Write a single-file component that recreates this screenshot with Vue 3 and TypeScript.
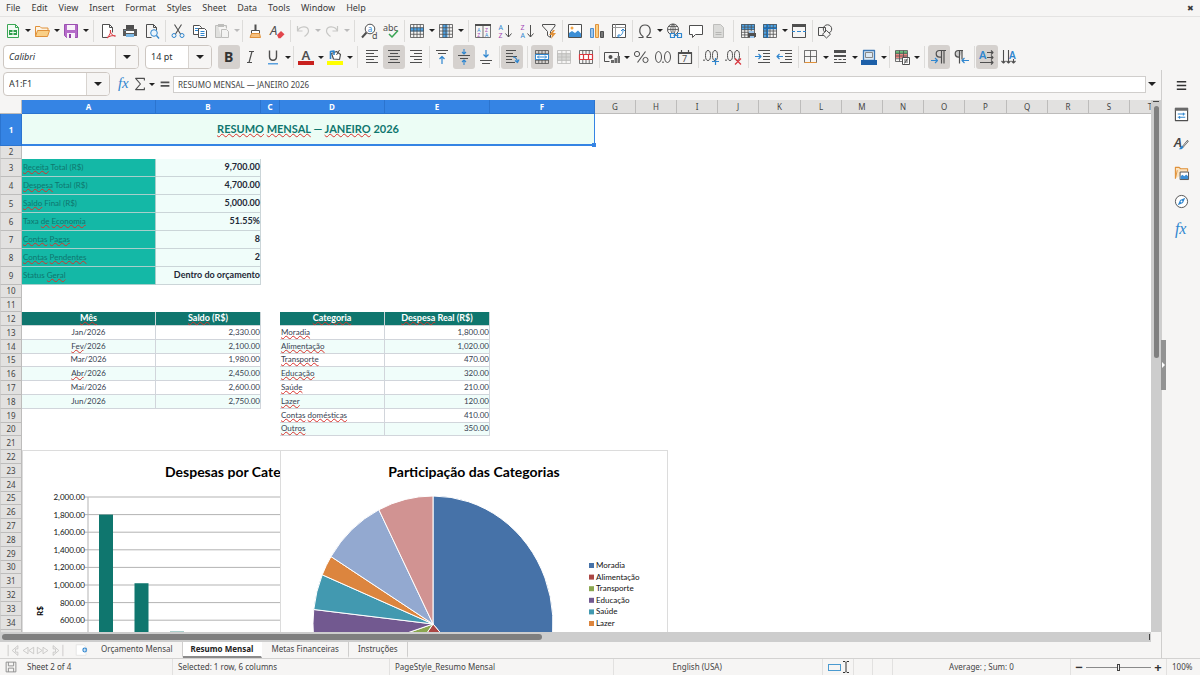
<script setup lang="ts">
import { computed, onMounted, onUnmounted, ref } from 'vue'

type Tool = { i: string; label: string; drop?: boolean; on?: boolean; off?: boolean } | { sep: 'narrow' | 'wide' }

const K = '#4f4f4f'
const B = '#2f86cf'
const grid = (x: number, y: number, w: number, h: number, c: number, r: number, s = K) => {
  let d = `M${x} ${y}h${w}v${h}h${-w}z`
  for (let n = 1; n < c; n++) d += `M${x + (w * n) / c} ${y}v${h}`
  for (let n = 1; n < r; n++) d += `M${x} ${y + (h * n) / r}h${w}`
  return `<path d="${d}" fill="none" stroke="${s}" stroke-width="0.800"/>`
}
const line = (d: string, s = K, w = 1, f = 'none') =>
  `<path d="${d}" fill="${f}" stroke="${s}" stroke-width="${w}" stroke-linejoin="round"/>`
const fill = (d: string, f: string) => `<path d="${d}" fill="${f}"/>`
const txt = (t: string, x: number, y: number, size: number, f = K, extra = '') =>
  `<text x="${x}" y="${y}" font-size="${size}" fill="${f}" font-family="Noto Sans, sans-serif" ${extra}>${t}</text>`

const icons: Record<string, string> = {
  new: line('M2.500 1.500h8l3 3v10h-11z', '#3aa655', 1, '#f3faf4') + line('M10.500 1.500v3h3', '#3aa655') + fill('M4 7h8v5h-8z', '#2f9e4b') + line('M5 9.500h6M8 7v5', '#e7f6ea'),
  open: line('M1.500 13.500v-10h4.500l1.500 1.500h6.500v3', '#e0913a', 1, '#fdf3e3') + line('M1.500 13.500l2-6h12l-2 6z', '#e0913a', 1, '#f9cf86'),
  save: line('M1.500 1.500h13v13h-11l-2-2z', '#9b4fb0', 1, '#b56bc9') + fill('M4 2h8v5h-8z', '#f8f1fa') + fill('M4 10h8v5h-8z', '#f8f1fa') + fill('M6 11h2v4h-2z', '#8d43a3'),
  pdf: line('M2.500 14.500v-13h7l3 3v5M2.500 14.500h5', K, 1, '#fff') + line('M9.500 1.500v3h3') + line('M7 15c3-3 4-6 3.500-8c-1 2 2 6.500 5 6c-3-1-6 0-8.500 2z', '#d9363e', 1),
  print: fill('M4 2h8v4h-8z', K) + fill('M1 6h14v7h-14z', '#5a5a5a') + fill('M4 8h8v2h-8z', '#fff') + fill('M4 11h8v3h-8z', '#7db9e6') + line('M2.500 7.500h1', '#7db9e6'),
  preview: line('M2.500 14.500v-13h7l3 3v3M2.500 14.500h5', K) + line('M9.500 1.500v3h3') + `<circle cx="10" cy="10" r="3.300" fill="#eaf4fc" stroke="${B}"/>` + line('M12.500 12.500l2.500 3', B, 1.3),
  cut: line('M4.500 1.500l6 9.500M11.500 1.500l-6 9.500', K, 1.1) + `<circle cx="4" cy="12.500" r="2" fill="none" stroke="${B}"/><circle cx="12" cy="12.500" r="2" fill="none" stroke="${B}"/>`,
  copy: line('M1.500 2.500h6l2 2v7h-8z', K, 1, '#fff') + line('M3 5.500h4M3 7.500h4', B) + line('M6.500 5.500h6l2 2v7h-8z', K, 1, '#fff') + line('M8.500 8.500h4M8.500 10.500h4M8.500 12.500h4', B),
  paste: line('M4 2.500h-2.500v12h6M10 2.500h2.500v3', '#b9b9b7', 1, '#dededc') + fill('M4 1h6v3h-6z', '#b9b9b7') + line('M7.500 6.500h5l2 2v6h-7z', '#b9b9b7', 1, '#f3f3f2'),
  clone: line('M8.500 1.500v6', K, 2) + line('M4.500 7.500h8v3h-8z', K, 1, '#fff') + line('M4.500 10.500l-1.500 4h10.500l-1-4z', '#e0913a', 1, '#f6c07e'),
  clear: txt('A', 1, 12, 13, K, 'font-style="italic"') + fill('M8 12l4-4l3.500 3.200l-4 4h-2z', '#e2464c'),
  undo: line('M2.500 3v5h5M2.500 8c2-5 11-6 11 0c0 2-2 4-4 5.500', '#c3c3c1', 1.2),
  redo: line('M13.500 3v5h-5M13.500 8c-2-5-11-6-11 0c0 2 2 4 4 5.500', '#c3c3c1', 1.2),
  find: `<circle cx="9" cy="6" r="4.800" fill="#fff" stroke="${K}"/>` + line('M5.500 9.500l-4.500 5', K, 2) + txt('a', 6.7, 8.500, 8, B) + txt('d', 11, 15.500, 9, K),
  spell: txt('abc', 0, 8, 9, K) + line('M6 11l3 3l6-6.500', '#3aa655', 1.5),
  row: fill('M1 4.500h14v4h-14z', '#4aa3e8') + grid(1.5, 1.5, 13, 13, 4, 4),
  col: fill('M5 1h4.500v14h-4.500z', '#4aa3e8') + grid(1.5, 1.5, 13, 13, 4, 4),
  sort: grid(0.5, 1.5, 15, 13, 2, 1) + fill('M0 1h16v2h-16z', K) + txt('A', 2.2, 8.6, 5, B) + txt('Z', 2.2, 14, 5, '#a348b5') + txt('Z', 10, 8.6, 5, '#a348b5') + txt('A', 10, 14, 5, B),
  asc: txt('A', 1.5, 6.500, 7, B) + txt('Z', 1.5, 15, 7, '#a348b5') + line('M11.500 2v12M8.500 10.500l3 3.500l3-3.500'),
  desc: txt('Z', 1.5, 6.500, 7, '#a348b5') + txt('A', 1.5, 15, 7, B) + line('M11.500 2v12M8.500 10.500l3 3.500l3-3.500'),
  filter: line('M1.500 1.500h12.500v1.500l-4.500 5.500v6l-3-2v-4l-5-5.500z') + fill('M12 7l-4 5h3l-1 4l5-6h-3l2-3z', '#e0913a'),
  image: line('M1.500 1.500h13v13h-13z', K, 1, '#fff') + fill('M2 14v-4l3-2l3 2l3-2.500l3 3v3.500z', '#3d8fd6') + `<circle cx="5" cy="5" r="1.500" fill="#f2a549"/>`,
  chart: line('M1.500 5.500h3v9h-3z', '#4f8fcd', 1, '#9cc6ee') + line('M6.500 1.500h3v13h-3z', '#e0913a', 1, '#f9cf86') + line('M11.500 8.500h3v6h-3z', K, 1, '#777'),
  pivot: line('M1.500 1.500h13v13h-13z', K, 1, '#fff') + line('M1.500 4.500h13M4.500 1.500v13', '#9a9a9a') + line('M7 13c3 0 5-2 5-6M10 8l2-2l2 2M8.500 11l-2 2l2 2', B),
  omega: line('M1.500 14.500h4.500v-1c-5-3.500-4-11.500 2-11.500s7 8 2 11.500v1h4.500', K, 1.2),
  link: `<circle cx="7" cy="6.500" r="5.500" fill="none" stroke="${K}"/>` + line('M1.500 6.500h11M7 1v10M2.500 3.500h9M7 1c-3 3-3 7 0 11M7 1c3 3 3 7 0 11', K, 0.8) + line('M4.500 10.500h4v4h-4zM11.500 10.500h4v4h-4zM7.500 12.500h5', B, 1.2, '#f6f5f4'),
  comment: line('M1.500 2.500h13v9h-7l-3 3v-3h-3z', K, 1, '#fff'),
  page: line('M3.500 1.500h7l3 3v10h-10z', '#b9b9b7', 1, '#d9d9d7') + line('M5.500 9.500h6M5.500 11.500h6', '#b0b0ae'),
  printarea: fill('M1 1h14v6h-14z', '#4aa3e8') + grid(1.5, 1.5, 13, 13, 4, 5) + fill('M8 10h8v4h-8z', '#4f4f4f') + fill('M9 8h5v2h-5zM10 13h4v2h-4z', '#9cc6ee'),
  freeze: fill('M1 1h4.500v14h-4.500zM1 1h14v4h-14z', '#4aa3e8') + grid(1.5, 1.5, 13, 13, 4, 4) + line('M5.500 1v14M1 5.500h14', '#1c6fb8', 1.5),
  split: fill('M1 1h14v3h-14z', K) + line('M1.500 1.500v13h13v-13') + line('M1 8.500h3M6 8.500h4M12 8.500h3', B),
  shapes: line('M1.500 4.500h7v8h-7z') + `<circle cx="10.500" cy="6" r="4.200" fill="none" stroke="${K}"/>` + line('M9.500 7.500l4 3.700l-4 3.800l-4-3.800z', K, 1, '#f6f5f4'),
  bold: txt('B', 3, 13, 14, '#333', 'font-weight="700"'),
  italic: line('M6 2.500h5M9 2.500l-3 11M4 13.500h5', K, 1.2),
  underline: line('M4.500 1.500v6c0 5 7 5 7 0v-6', K, 1.4) + fill('M3 14h10v1.500h-10z', '#5aa0de'),
  fontcolor: txt('A', 3.5, 10.5, 13, K, 'font-weight="600"') + fill('M0 12h16v4h-16z', '#c9211e'),
  highlight: line('M6.500 10l-2-5.500l5-2l4 3l-1 5z', K, 1.2, '#fff') + line('M3.500 10v-7.500l3.500-.5v4', B, 1.6) + line('M12.500 1l-3 5', K, 1) + fill('M0 12h16v4h-16z', '#ffff00'),
  left: line('M2 1.500h12M2 4.500h8M2 7.500h12M2 10.500h8M2 13.500h12', K, 1.2),
  center: line('M2 1.500h12M4 4.500h8M2 7.500h12M4 10.500h8M2 13.500h12', K, 1.2),
  right: line('M2 1.500h12M6 4.500h8M2 7.500h12M6 10.500h8M2 13.500h12', K, 1.2),
  top: line('M2 1.500h12M4 4.500h8', K, 1.2) + line('M8 15v-7M5.500 10l2.500-2.500l2.500 2.500', B, 1.2),
  middle: line('M2 6.500h12M4 9.500h8', K, 1.2) + line('M8 0v5M6 3l2 2l2-2M8 16v-5M6 13l2-2l2 2', B, 1.1),
  bottom: line('M2 11.500h12M4 14.500h8', K, 1.2) + line('M8 1v7M5.500 5.500l2.500 2.500l2.500-2.500', B, 1.2),
  wrap: line('M2 1.500h10M2 4.500h7M2 7.500h11M2 10.500h6M2 13.500h9', K, 1.2) + line('M9 8c3 0 4 2 4.500 5M11 11.500l2.500 2l1.500-3', B, 1.2),
  merge: grid(1.5, 1.5, 13, 13, 4, 4) + line('M1.500 5.500h13v5h-13z', B, 1, '#fff') + line('M3.500 8h9M5 6.500l-1.500 1.500l1.500 1.500M11 6.500l1.500 1.500l-1.500 1.500', B),
  mergecells: fill('M1 4h14v8h-14z', '#d4d4d2') + grid(1.5, 1.5, 13, 13, 3, 4, '#b5b5b3'),
  unmerge: grid(1.5, 1.5, 13, 13, 4, 3) + line('M1.500 5.500h13v5h-13zM5.500 5.500v5M10.500 5.500v5', '#d9363e', 1.2, '#fff'),
  currency: line('M14.500 8v-4.500h-14v9h5') + `<circle cx="6.500" cy="8" r="2" fill="${K}"/>` + fill('M7 11h3v3h-3zM10.500 9h2.500v5h-2.500zM13.500 7h2.500v7h-2.500z', '#6a6a6a'),
  percent: line('M12.500 2.500l-8 11', K, 1.1) + `<circle cx="4" cy="5" r="2.600" fill="none" stroke="${K}"/><circle cx="12.500" cy="11" r="2.600" fill="none" stroke="${K}"/>`,
  number: `<ellipse cx="3.500" cy="8" rx="3" ry="5.500" fill="none" stroke="${K}"/><ellipse cx="12.500" cy="8" rx="3" ry="5.500" fill="none" stroke="${K}"/>` + line('M8 12.500v1.500', K, 1.3),
  date: line('M1.500 3.500h13v11h-13zM4.500 1v3M11.500 1v3', K, 1.2) + line('M1.500 4h13', K, 2) + txt('7', 5, 13, 9, K),
  adddec: `<ellipse cx="5" cy="6.500" rx="2.500" ry="5" fill="none" stroke="${K}"/><ellipse cx="12" cy="6.500" rx="2.500" ry="5" fill="none" stroke="${K}"/>` + line('M1 10.500v1.500', K, 1.3) + line('M9 12.500h7M12.500 9v7', B, 1.2),
  deldec: `<ellipse cx="5" cy="6.500" rx="2.500" ry="5" fill="none" stroke="${K}"/><ellipse cx="12" cy="6.500" rx="2.500" ry="5" fill="none" stroke="${K}"/>` + line('M1 10.500v1.500', K, 1.3) + line('M10 9.500l6 6M16 9.500l-6 6', '#d9363e', 1.2),
  indent: line('M3 1.500h12M8 4.500h7M8 7.500h7M8 10.500h7M3 13.500h12', K, 1.1) + line('M0 7.500h6M3.500 5l2.500 2.500l-2.500 2.500', B, 1.1),
  outdent: line('M3 1.500h12M8 4.500h7M8 7.500h7M8 10.500h7M3 13.500h12', K, 1.1) + line('M0 7.500h6M2.500 5l-2.500 2.500l2.500 2.500', B, 1.1),
  borders: grid(1.5, 1.5, 12, 12, 2, 2) + line('M1.500 13.500h12', '#e0913a'),
  linestyle: fill('M2 1h12v3h-12zM2 6h12v2h-12z', K) + line('M2 10.500h3M6.500 10.500h3M11 10.500h3', K, 1) + line('M2 13.500h12', K, 1),
  bordercolor: line('M2.500 1.500h11v10h-11z', '#3d78b5', 1.3, '#dceaf6') + line('M4.500 3.500h7v5h-7z', '#888') + fill('M0 11h16v5h-16z', '#1d5fa8'),
  conditional: fill('M1 2h12v3h-12z', '#6cc07e') + fill('M1 5h12v4h-12z', '#ef8783') + grid(1.5, 1.5, 12, 11, 3, 4) + line('M8.500 8.500h7v7h-7z', K, 1, '#fff') + line('M10 11h4M10 13h4M13.500 9.500l-3 5', K, 0.9),
  ltr: line('M15 1.500h-6.500a3.300 3.300 0 0 0 0 6.600h1.500M10.500 1.500v13M13 1.500v13', K, 1.2) + line('M0 11.500h6M4 9l2.500 2.500l-2.500 2.500', B, 1.1),
  rtl: line('M10 1.500h-4.500a3.300 3.300 0 0 0 0 6.600h1M6.500 1.500v13M9 1.500v9', K, 1.2, '#ccc') + line('M9 11.500h7M11.500 9l-2.500 2.500l2.500 2.500', B, 1.1),
  horiz: txt('A', 0, 10, 11, B, 'font-weight="600"') + line('M8 3.500h6M8 8.500h6M1 13.500h13M12 1.500l2 2l-2 2M12 6.500l2 2l-2 2M12 11.500l2 2l-2 2', K, 1.1),
  vert: txt('A', 8, 10, 10, B, 'font-weight="600"') + line('M2.500 1v13M7.500 1v13M12.500 10v4M.5 12l2 2l2-2M5.500 12l2 2l2-2M10.500 12l2 2l2-2', K, 1.1),
  fx: `<text x="1" y="12" font-size="17" fill="${B}" font-style="italic" font-family="Liberation Serif, serif">fx</text>`,
  sigma: line('M13 4v-2.500h-10l5.500 6.500l-5.500 6.500h10v-2.500', K, 1.3),
  equals: line('M3 6h10M3 10h10', K, 2),
  menu: line('M3 4h10M3 8h10M3 12h10', '#333', 1.8),
  props: line('M1.500 1.500h13v13h-13z', K, 1.2, '#fff') + fill('M1 1h14v3h-14z', '#6a6a6a') + line('M4 7.500h8M10 6v3M4 11h8M6 9.500v3', B, 1.1),
  styles: txt('A', 0, 12, 14, '#444', 'font-weight="600" font-style="italic"') + line('M15 5l-6 7', K, 2) + line('M14.500 5.500l-5 6', '#fff', 0.8) + fill('M5 14c2 0 1-3 4-3.500c2 2 0 4.500-4 3.500z', B),
  gallery: line('M1.500 14.500v-12h4l1.500 1.500h7.500v3', '#e0913a', 1.2, '#fbe3c0') + line('M1.500 14.500l2-9', '#e0913a') + line('M6.500 7.500h9v8h-9z', K, 1, '#fff') + fill('M7 15v-3l2-1.500l2 1.500l2-2l2 2v3z', '#3d8fd6'),
  navigator: `<circle cx="8" cy="8" r="6.500" fill="#fff" stroke="${K}"/>` + fill('M12 4l-2.500 5.500l-5.500 2.500l2.500-5.500z', B) + `<circle cx="8" cy="8" r="1" fill="#fff"/>`,
  savesmall: line('M1.500 1.500h13v13h-13zM4.500 1.500v5h7v-5M4.500 14.500v-5h7v5', '#8a8a8a', 1.2),
  addsheet: line('M1.500 14.500v-13h9l3 3v10z', '#e3e3e1', 1, '#fff') + `<circle cx="12" cy="8" r="3" fill="${B}"/>` + line('M10 8h4M12 6v4', '#fff'),
}

const n = { sep: 'narrow' } as Tool
const w = { sep: 'wide' } as Tool
const t = (i: string, label: string, o: { drop?: boolean; on?: boolean; off?: boolean } = {}): Tool => ({ i, label, ...o })

const bar1: Tool[] = [
  t('new', 'New', { drop: true }), t('open', 'Open', { drop: true }), t('save', 'Save', { drop: true }), w,
  t('pdf', 'Export as PDF'), t('print', 'Print'), t('preview', 'Print Preview'), n,
  t('cut', 'Cut'), t('copy', 'Copy'), t('paste', 'Paste', { drop: true, off: true }), n,
  t('clone', 'Clone Formatting'), t('clear', 'Clear Formatting'), n,
  t('undo', 'Undo', { drop: true, off: true }), t('redo', 'Redo', { drop: true, off: true }), w,
  t('find', 'Find and Replace'), t('spell', 'Spelling'), n,
  t('row', 'Row', { drop: true }), t('col', 'Column', { drop: true }), w,
  t('sort', 'Sort'), t('asc', 'Sort Ascending'), t('desc', 'Sort Descending'), t('filter', 'AutoFilter'), n,
  t('image', 'Insert Image'), t('chart', 'Insert Chart'), t('pivot', 'Pivot Table'), n,
  t('omega', 'Special Character', { drop: true }), t('link', 'Hyperlink'), t('comment', 'Comment'), t('page', 'Headers and Footers', { off: true }), w,
  t('printarea', 'Print Area'), t('freeze', 'Freeze Panes', { drop: true }), t('split', 'Split Window'), n,
  t('shapes', 'Draw Functions'),
]
const bar2: Tool[] = [
  t('bold', 'Bold', { on: true }), t('italic', 'Italic'), t('underline', 'Underline', { drop: true }), n,
  t('fontcolor', 'Font Color', { drop: true }), t('highlight', 'Highlighting', { drop: true }), w,
  t('left', 'Align Left'), t('center', 'Center', { on: true }), t('right', 'Align Right'), n,
  t('top', 'Align Top'), t('middle', 'Center Vertically', { on: true }), t('bottom', 'Align Bottom'), n,
  t('wrap', 'Wrap Text', { on: true }), w,
  t('merge', 'Merge and Center', { on: true }), t('mergecells', 'Merge Cells', { off: true }), t('unmerge', 'Unmerge Cells'), n,
  t('currency', 'Currency', { drop: true }), t('percent', 'Percent'), t('number', 'Number'), t('date', 'Date'), n,
  t('adddec', 'Add Decimal Place'), t('deldec', 'Delete Decimal Place'), w,
  t('indent', 'Increase Indent'), t('outdent', 'Decrease Indent'), n,
  t('borders', 'Borders', { drop: true }), t('linestyle', 'Border Style', { drop: true }), t('bordercolor', 'Border Color', { drop: true }), n,
  t('conditional', 'Conditional', { drop: true }), w,
  t('ltr', 'Left-To-Right', { on: true }), t('rtl', 'Right-To-Left'), n,
  t('horiz', 'Text direction left to right', { on: true }), t('vert', 'Text direction top to bottom'),
]

const menus = ['File', 'Edit', 'View', 'Insert', 'Format', 'Styles', 'Sheet', 'Data', 'Tools', 'Window', 'Help']
const sideTools = [['props', 'Properties'], ['styles', 'Styles'], ['gallery', 'Gallery'], ['navigator', 'Navigator'], ['fx', 'Functions']]
const tabs = ['Orçamento Mensal', 'Resumo Mensal', 'Metas Financeiras', 'Instruções']
const activeTab = ref('Resumo Mensal')
const formula = ref('RESUMO MENSAL — JANEIRO 2026')
const zoom = ref(100)

// Only the rows and columns that fit in the window are rendered.
const win = ref({ w: window.innerWidth, h: window.innerHeight })
const measure = () => { win.value = { w: window.innerWidth, h: window.innerHeight } }
onMounted(() => window.addEventListener('resize', measure))
onUnmounted(() => window.removeEventListener('resize', measure))

const letters = [...'ABCDEFGHIJKLMNOPQRSTUVWXYZ']
const allNames = [...letters, ...letters.map((c) => 'A' + c), ...letters.map((c) => 'B' + c)]
const baseWidths = [134, 105, 19, 105, 105, 105]
const columns = computed(() => {
  const out: { name: string; width: number }[] = []
  let x = 22
  for (let i = 0; i < allNames.length && (i < 6 || x < win.value.w - 50); i++) {
    const width = baseWidths[i] ?? (i % 5 === 0 ? 42 : 41)
    out.push({ name: allNames[i], width })
    x += width
  }
  return out
})
const tableWidth = computed(() => 22 + columns.value.reduce((a, c) => a + c.width, 0))
const rowCount = computed(() => Math.max(22, 9 + Math.ceil((win.value.h - 328) / 13.8)))

// Words wrapped in underscores are flagged by the spell checker.
const cells: Record<string, { text: string; kind: string }> = {}
const put = (at: string, text: string, kind: string) => { cells[at] = { text, kind } }
const summary = [
  ['_Receita_ Total (R$)', '9,700.00'], ['_Despesa_ Total (R$)', '4,700.00'], ['_Saldo_ Final (R$)', '5,000.00'],
  ['Taxa _de_ _Economia_', '51.55%'], ['_Contas_ _Pagas_', '8'], ['_Contas_ _Pendentes_', '2'], ['Status _Geral_', 'Dentro do orçamento'],
]
summary.forEach(([a, b], i) => { put('A' + (i + 3), a, 'key'); put('B' + (i + 3), b, 'total') })
put('A12', '_Mês_', 'head'); put('B12', '_Saldo_ (R$)', 'head')
put('D12', '_Categoria_', 'head'); put('E12', '_Despesa_ Real (R$)', 'head')
const months = [['Jan/2026', '2,330.00'], ['_Fev_/2026', '2,100.00'], ['Mar/2026', '1,980.00'], ['_Abr_/2026', '2,450.00'], ['Mai/2026', '2,600.00'], ['Jun/2026', '2,750.00']]
months.forEach(([a, b], i) => {
  const z = i % 2 ? ' tint' : ''
  put('A' + (i + 13), a, 'mid' + z); put('B' + (i + 13), b, 'num' + z)
})
const categories = [
  { name: 'Moradia', spell: '_Moradia_', value: 1800, color: '#4672a8' },
  { name: 'Alimentação', spell: '_Alimentação_', value: 1020, color: '#ab4744' },
  { name: 'Transporte', spell: '_Transporte_', value: 470, color: '#8aa64f' },
  { name: 'Educação', spell: '_Educação_', value: 320, color: '#725990' },
  { name: 'Saúde', spell: '_Saúde_', value: 210, color: '#4299b0' },
  { name: 'Lazer', spell: '_Lazer_', value: 120, color: '#dc853e' },
  { name: 'Contas domésticas', spell: '_Contas_ _domésticas_', value: 410, color: '#93a9d0' },
  { name: 'Outros', spell: '_Outros_', value: 350, color: '#d19392' },
]
const money = (v: number) => v.toLocaleString('en-US', { minimumFractionDigits: 2 })
categories.forEach((c, i) => {
  const z = i % 2 ? ' tint' : ''
  put('D' + (i + 13), c.spell, 'txt' + z); put('E' + (i + 13), money(c.value), 'num' + z)
})
const parts = (s: string) => s.split('_').map((text, i) => ({ text, bad: i % 2 === 1 })).filter((p) => p.text)

const total = categories.reduce((a, c) => a + c.value, 0)
let acc = 0
const slices = categories.map((c) => {
  const pt = (v: number) => {
    const a = (v / total) * Math.PI * 2
    return `${153 + 120 * Math.sin(a)} ${174 - 128 * Math.cos(a)}`
  }
  const from = pt(acc)
  acc += c.value
  return { color: c.color, d: `M153 174L${from}A120 128 0 0 1 ${pt(acc)}Z` }
})
const yOf = (v: number) => 223 - (v * 176) / 2000
const ticks = Array.from({ length: 11 }, (_, i) => i * 200)
</script>

<template>
  <div class="app">
    <nav class="menubar" aria-label="Menu">
      <button v-for="m in menus" :key="m" type="button">{{ m }}</button>
      <button class="close" type="button" aria-label="Close document">✖</button>
    </nav>

    <div class="toolbar first" role="toolbar" aria-label="Standard">
      <template v-for="(b, i) in bar1" :key="i">
        <span v-if="'sep' in b" class="sep" :class="b.sep"></span>
        <template v-else>
          <button class="tool" :class="{ on: b.on }" type="button" :aria-label="b.label" :disabled="b.off">
            <svg viewBox="0 0 16 16" v-html="icons[b.i]"></svg>
          </button>
          <button v-if="b.drop" class="drop" type="button" :aria-label="b.label + ' options'" :disabled="b.off"><i></i></button>
        </template>
      </template>
    </div>

    <div class="toolbar second" role="toolbar" aria-label="Formatting">
      <div class="combo font"><input value="Calibri" aria-label="Font name" /><button type="button" aria-label="Choose font"><i></i></button></div>
      <div class="combo size"><input value="14 pt" aria-label="Font size" /><button type="button" aria-label="Choose size"><i></i></button></div>
      <template v-for="(b, i) in bar2" :key="i">
        <span v-if="'sep' in b" class="sep" :class="b.sep"></span>
        <template v-else>
          <button class="tool" :class="{ on: b.on }" type="button" :aria-label="b.label" :disabled="b.off">
            <svg viewBox="0 0 16 16" v-html="icons[b.i]"></svg>
          </button>
          <button v-if="b.drop" class="drop" type="button" :aria-label="b.label + ' options'"><i></i></button>
        </template>
      </template>
    </div>

    <div class="body">
      <main class="main">
        <div class="formulabar">
          <div class="combo name"><input value="A1:F1" aria-label="Name box" /><button type="button" aria-label="Choose range"><i></i></button></div>
          <button class="ftool" type="button" aria-label="Function Wizard"><svg viewBox="0 0 16 16" v-html="icons.fx"></svg></button>
          <button class="ftool" type="button" aria-label="Select Function"><svg viewBox="0 0 16 16" v-html="icons.sigma"></svg></button>
          <button class="drop" type="button" aria-label="Function options"><i></i></button>
          <button class="ftool" type="button" aria-label="Formula"><svg viewBox="0 0 16 16" v-html="icons.equals"></svg></button>
          <input v-model="formula" class="formula" aria-label="Input line" />
          <button class="expand" type="button" aria-label="Expand formula bar"><i></i></button>
        </div>

        <div class="view">
          <div class="sheet">
            <table :style="{ width: tableWidth + 'px' }">
              <colgroup>
                <col class="rowcol" />
                <col v-for="c in columns" :key="c.name" :style="{ width: c.width + 'px' }" />
              </colgroup>
              <thead>
                <tr>
                  <th class="corner"></th>
                  <th v-for="(c, i) in columns" :key="c.name" scope="col" :class="{ sel: i < 6 }">{{ c.name }}</th>
                </tr>
              </thead>
              <tbody>
                <tr v-for="r in rowCount" :key="r" :class="{ title: r === 1, thin: r === 2 || (r > 9 && r % 5 === 0), tall: r > 2 && r < 10 }">
                  <th scope="row" :class="{ sel: r === 1 }">{{ r }}</th>
                  <template v-for="(c, i) in columns" :key="c.name">
                    <td v-if="r === 1 && i === 0" colspan="6" class="banner">
                      <span class="bad">RESUMO</span> <span class="bad">MENSAL</span> — <span class="bad">JANEIRO</span> 2026
                      <b class="handle"></b>
                    </td>
                    <td v-else-if="r > 1 || i > 5" :class="cells[c.name + r]?.kind">
                      <template v-if="cells[c.name + r]"><span v-for="(p, k) in parts(cells[c.name + r].text)" :key="k" :class="{ bad: p.bad }">{{ p.text }}</span></template>
                    </td>
                  </template>
                </tr>
              </tbody>
            </table>

            <figure class="chart bars">
              <svg width="446" height="290" viewBox="0 0 446 290" role="img" aria-label="Despesas por Categoria">
                <text x="143" y="27" class="ctitle">Despesas por Categoria</text>
                <g v-for="v in ticks" :key="v">
                  <line x1="63" x2="350" :y1="yOf(v)" :y2="yOf(v)" class="gridline" />
                  <text x="63" :y="yOf(v) + 3" class="tick">{{ money(v) }}</text>
                </g>
                <line x1="66" x2="66" y1="47" y2="223" class="gridline" />
                <rect v-for="(c, i) in categories" :key="c.name" :x="77 + i * 35.5" :y="yOf(c.value)" width="14" :height="(c.value * 176) / 2000" fill="#0f766e" />
                <text transform="translate(21 166) rotate(-90)" class="axis">R$</text>
              </svg>
            </figure>
            <figure class="chart pie">
              <svg width="388" height="330" viewBox="0 0 388 330" role="img" aria-label="Participação das Categorias">
                <text x="194" y="27" class="ctitle centered">Participação das Categorias</text>
                <path v-for="s in slices" :key="s.color" :d="s.d" :fill="s.color" stroke="#fff" />
                <g v-for="(c, i) in categories" :key="c.name">
                  <rect x="309" :y="113 + i * 11.6" width="5" height="5" :fill="c.color" />
                  <text x="316" :y="118 + i * 11.6" class="legend">{{ c.name }}</text>
                </g>
              </svg>
            </figure>
          </div>
          <div class="vscroll"><i></i></div>
        </div>

        <div class="hscroll"><div class="track"><i></i></div></div>

        <div class="tabs">
          <div class="tabnav">
            <button type="button" aria-label="First sheet"><svg viewBox="0 0 16 16"><path d="M2 1v14M14 2L7 8l7 6v-4h-3V6h3z" /></svg></button>
            <button type="button" aria-label="Previous sheet"><svg viewBox="0 0 16 16"><path d="M8 4L2 8l6 4zM15 4L9 8l6 4z" /></svg></button>
            <button type="button" aria-label="Next sheet"><svg viewBox="0 0 16 16"><path d="M1 4l6 4l-6 4zM8 4l6 4l-6 4z" /></svg></button>
            <button type="button" aria-label="Last sheet"><svg viewBox="0 0 16 16"><path d="M14 1v14M2 2l7 6l-7 6v-4h3V6H2z" /></svg></button>
          </div>
          <button class="add" type="button" aria-label="Add sheet"><svg viewBox="0 0 16 16" v-html="icons.addsheet"></svg></button>
          <button v-for="s in tabs" :key="s" class="tab" type="button" :class="{ active: s === activeTab }" @click="activeTab = s">{{ s }}</button>
        </div>
      </main>

      <aside class="side">
        <button type="button" aria-label="Sidebar settings"><svg viewBox="0 0 16 16" v-html="icons.menu"></svg></button>
        <button v-for="s in sideTools" :key="s[0]" type="button" :aria-label="s[1]"><svg viewBox="0 0 16 16" v-html="icons[s[0]]"></svg></button>
        <button class="grip" type="button" aria-label="Toggle sidebar"><i></i></button>
      </aside>
    </div>

    <footer class="status">
      <span class="ic"><svg viewBox="0 0 16 16" v-html="icons.savesmall"></svg></span>
      <span>Sheet 2 of 4</span>
      <span>Selected: 1 row, 6 columns</span>
      <span>PageStyle_Resumo Mensal</span>
      <span class="mid lang">English (USA)</span>
      <span class="mode"><i></i><svg viewBox="0 0 6 12"><path d="M0 .5h2l1 1l1-1h2M3 1.500v9M0 11.500h2l1-1l1 1h2" /></svg></span>
      <span></span>
      <span></span>
      <span class="mid">Average: ; Sum: 0</span>
      <span class="zoom">
        <button type="button" aria-label="Zoom out">−</button>
        <input v-model="zoom" type="range" min="20" max="180" aria-label="Zoom" />
        <button type="button" aria-label="Zoom in">+</button>
      </span>
      <span class="pct">{{ zoom }}%</span>
    </footer>
  </div>
</template>

<style>
html, body, #app { height: 100%; }
body { margin: 0; }
</style>

<style scoped>
* { box-sizing: border-box; }
.app { height: 100%; display: flex; flex-direction: column; overflow: hidden; background: #f6f5f4; color: #3a3a3a; font: 9px/12px "Noto Sans", sans-serif; }
button { border: 0; padding: 0; margin: 0; background: none; color: inherit; font: inherit; display: flex; align-items: center; justify-content: center; flex: none; }
input { font: inherit; color: inherit; min-width: 0; margin: 0; outline: 0; }
svg { display: block; overflow: visible; }
.menubar { height: 17px; flex: none; display: flex; align-items: center; gap: 11px; padding: 0 6px; border-bottom: 1px solid #e4e3e2; }
.close { margin-left: auto; font-size: 8px; }
.toolbar { flex: none; display: flex; align-items: center; }
.first { height: 27px; padding-left: 2px; }
.second { height: 26px; padding-left: 3px; }
.tool { width: 22px; height: 24px; border-radius: 3px; }
.tool svg { width: 16px; height: 16px; }
.tool.on { background: #d5d1ce; }
.tool:disabled { opacity: .9; }
.drop { width: 7px; height: 24px; }
.drop i, .combo i, .expand i { border: 3px solid transparent; border-top: 3px solid #222; border-bottom: 0; flex: none; }
.drop:disabled i { border-top-color: #bbb; }
.combo i, .expand i { border-width: 4px 4px 0; }
.sep { width: 4px; height: 22px; flex: none; background: linear-gradient(#dddcda, #dddcda) center / 1px 100% no-repeat; }
.sep.wide { width: 8px; }
.combo { display: flex; flex: none; height: 24px; background: #fff; border: 1px solid #cdc7c2; border-radius: 4px; overflow: hidden; }
.combo input { flex: 1; border: 0; background: none; padding: 0 5px; color: #2e3436; }
.combo button { width: 23px; border-left: 1px solid #d8d4d0; background: #f6f5f4; }
.font { width: 136px; margin-right: 6px; }
.font input { font-style: italic; }
.size { width: 67px; margin-right: 6px; }
.name { width: 107px; margin-right: 6px; }
.body { flex: 1; min-height: 0; display: flex; }
.main { flex: 1; min-width: 0; display: flex; flex-direction: column; }
.formulabar { height: 30px; flex: none; display: flex; align-items: center; padding: 0 3px 2px; }
.ftool { width: 16px; height: 22px; }
.ftool svg { width: 14px; height: 14px; }
.formulabar .drop { margin-right: 2px; }
.formula { flex: 1; height: 17px; border: 1px solid #d0cecc; background: #fff; padding: 0 4px; font-size: 8px; color: #444; }
.expand { width: 12px; height: 20px; }
.view { flex: 1; min-height: 0; display: flex; }
.sheet { position: relative; flex: 1; min-width: 0; overflow: hidden; background: #fff; }
table { table-layout: fixed; border-collapse: separate; border-spacing: 0; font: 8px/10px Lato, sans-serif; color: #333; }
.rowcol { width: 22px; }
th, td { padding: 0; white-space: nowrap; }
tr { height: 14px; }
tr.thin { height: 13px; }
tr.tall { height: 18px; }
tr.title { height: 32px; }
th { background: #e2e1e0; border-right: 1px solid #bdbcbb; border-bottom: 1px solid #bdbcbb; font: 8px/12px "Noto Sans", sans-serif; color: #444; }
tbody th { border-left: 1px solid #cfcecd; }
th.corner { background: #f6f5f4; border-color: transparent #bdbcbb #bdbcbb transparent; }
th.sel { background: #3584e4; border-color: #2b74cf; color: #fff; font-weight: 700; }
td { border-right: 1px solid transparent; border-bottom: 1px solid transparent; }
.bad { text-decoration: underline wavy #d8322c 1px; text-decoration-skip-ink: none; text-underline-offset: 0; }
td.banner { position: relative; background: #ecfdf5; border-right: 1px solid #3584e4; border-bottom: 2px solid #3584e4; text-align: center; color: #0f766e; font-weight: 700; font-size: 11px; line-height: 16px; }
.handle { position: absolute; right: -2px; bottom: -3px; width: 4px; height: 4px; background: #3584e4; }
td.key { background: #14b8a6; border-color: #a7cfcb; color: #0f766e; padding: 0 0 2px 1px; }
td.total { background: #f0fdfa; border-color: #cbd5d8; text-align: right; font-weight: 700; font-size: 9px; color: #1f2937; padding-bottom: 2px; }
td.head, td.mid, td.num, td.txt { padding-bottom: 2px; }
td.head { background: #0f766e; color: #fff; font-weight: 700; font-size: 9px; text-align: center; border-color: #cbd5d8; }
td.mid, td.num, td.txt { border-color: #d1d5db; color: #374151; }
td.mid { text-align: center; }
td.num { text-align: right; }
td.txt { padding-left: 1px; }
td.tint { background: #f0fdfa; }
.chart { position: absolute; top: 350px; margin: 0; background: #fff; border: 1px solid #dcdcdc; font-family: Lato, sans-serif; }
.chart svg { margin: -1px; }
.bars { left: 22px; }
.pie { left: 280px; }
.ctitle { font-size: 14px; font-weight: 700; fill: #000; }
.centered { text-anchor: middle; }
.gridline { stroke: #b3b3b3; }
.tick { font-size: 8px; text-anchor: end; fill: #111; }
.axis { font-size: 8px; font-weight: 700; fill: #000; }
.legend { font-size: 8px; fill: #111; }
.vscroll { width: 10px; flex: none; padding: 6px 2px 0 3px; background: linear-gradient(#444, #444) center 1px / 6px 1px no-repeat #cdcdcd; }
.vscroll i { display: block; width: 5px; height: 48%; border-radius: 3px; background: #7f7f7f; }
.hscroll { height: 10px; flex: none; padding-right: 10px; }
.track { height: 10px; padding: 2px 0 0 2px; background: linear-gradient(#444, #444) right 1px center / 1px 6px no-repeat #cdcdcd; }
.track i { display: block; width: 47%; height: 6px; border-radius: 3px; background: #7f7f7f; }
.tabs { height: 16px; flex: none; display: flex; align-items: stretch; font-size: 8px; color: #444; }
.tabnav { display: flex; align-items: center; padding-left: 5px; width: 70px; }
.tabnav button { width: 15px; }
.tabnav svg { width: 14px; height: 13px; fill: none; stroke: #c4c3c2; }
.add { width: 22px; }
.add svg { width: 13px; height: 14px; }
.tab { padding: 0 9px; border-right: 1px solid #cfcecd; border-bottom: 2px solid transparent; }
.tab.active { background: #fff; font-weight: 700; color: #222; border-right-color: transparent; border-bottom-color: #8b8b8b; padding: 0 8px; }
.side { position: relative; width: 39px; flex: none; border-left: 1px solid #cfcecd; display: flex; flex-direction: column; align-items: center; padding-top: 4px; }
.side > button { width: 24px; height: 22px; margin-bottom: 7px; }
.side svg { width: 15px; height: 15px; }
.side > .grip { position: absolute; left: -1px; top: 46%; width: 5px; height: 50px; background: #939393; margin: 0; }
.grip i { border: 3px solid transparent; border-left-color: #fff; border-right: 0; }
.status { height: 17px; flex: none; display: grid; grid-template-columns: 22px 151fr 217fr 224fr 209fr 31px 19px 20px 178fr 96px 33px; border-top: 1px solid #d3d2d1; font-size: 8px; color: #444; }
.status > span { display: flex; align-items: center; padding-left: 5px; border-right: 1px solid #e2e1e0; white-space: nowrap; }
.status > span:first-child, .status > span:last-child { border-right: 0; }
.ic svg { width: 12px; height: 12px; }
.status > .mid { justify-content: center; padding: 0; }
.status > .lang { padding-right: 20%; }
.mode i { width: 13px; height: 7px; border: 1px solid #4a9ad0; margin-right: 2px; }
.mode svg { width: 6px; height: 12px; fill: none; stroke: #333; }
.zoom button { width: 8px; font-size: 13px; font-weight: 700; color: #333; }
.status > .zoom { gap: 3px; padding-left: 4px; padding-right: 4px; }
.zoom input { appearance: none; flex: 1; height: 12px; background: linear-gradient(#8a8a8a, #8a8a8a) center / 100% 1px no-repeat; }
.zoom input::-webkit-slider-thumb { appearance: none; width: 3px; height: 7px; border: 1px solid #444; background: #f6f5f4; }
</style>
